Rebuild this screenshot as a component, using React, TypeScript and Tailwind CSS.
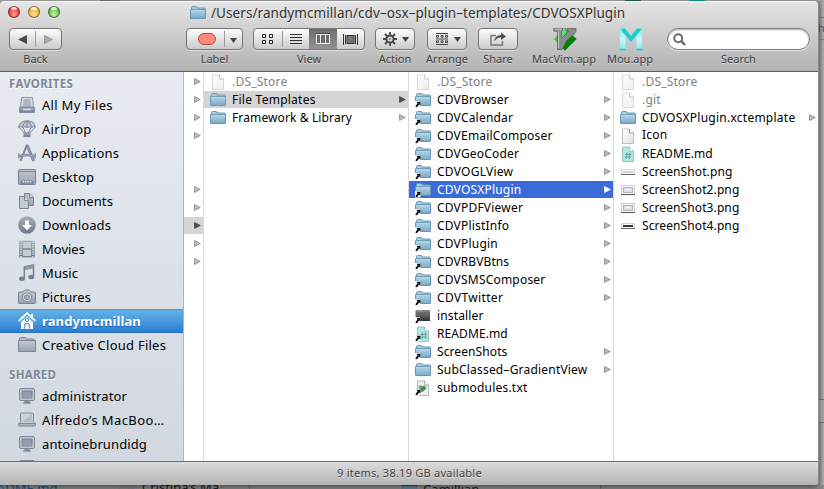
import type { ReactNode } from "react";

type Kind = "doc" | "folder" | "alias" | "terminal" | "readme" | "readmeAlias" | "vimAlias" | "shot" | "shot2" | "shot3" | "shot4";
type Entry = { name: string; kind: Kind; arrow?: boolean; dim?: boolean; selected?: "gray" | "blue"; track?: string; raised?: boolean };

function Defs() {
  return (
    <svg className="absolute size-0" aria-hidden="true">
      <defs>
        <linearGradient id="folder" x1="0" y1="0" x2="0" y2="1">
          <stop offset="0" stopColor="#b5d4e6" />
          <stop offset="1" stopColor="#78abca" />
        </linearGradient>
        <linearGradient id="side" x1="0" y1="0" x2="0" y2="1">
          <stop offset="0" stopColor="#a5adb9" />
          <stop offset="1" stopColor="#6f7b8c" />
        </linearGradient>
        <linearGradient id="pale" x1="0" y1="0" x2="0" y2="1">
          <stop offset="0" stopColor="#c3c9d2" />
          <stop offset="1" stopColor="#98a2b0" />
        </linearGradient>
        <linearGradient id="paper" x1="0" y1="0" x2="1" y2="1">
          <stop offset="0" stopColor="#ffffff" />
          <stop offset="1" stopColor="#e3e3e3" />
        </linearGradient>
        <linearGradient id="term" x1="0" y1="0" x2="0" y2="1">
          <stop offset="0" stopColor="#8a8a8a" />
          <stop offset="1" stopColor="#303030" />
        </linearGradient>
        <linearGradient id="mou" x1="0" y1="0" x2="0" y2="1">
          <stop offset="0" stopColor="#6ff0ea" />
          <stop offset="0.5" stopColor="#c9f9f6" />
          <stop offset="1" stopColor="#7af0ea" />
        </linearGradient>
        <linearGradient id="vim" x1="0" y1="0" x2="1" y2="1">
          <stop offset="0" stopColor="#5fdc7c" />
          <stop offset="1" stopColor="#006a00" />
        </linearGradient>
      </defs>
    </svg>
  );
}

function FolderShape() {
  return (
    <>
      <path d="M1.5 4V2.5Q1.5 1.5 2.5 1.5H6Q7 1.5 7 2.5V3H14.5Q15.5 3 15.5 4V5H1.5Z" fill="#a9cde1" stroke="#6b9ab5" />
      <path d="M0.5 4.5H15.5V13Q15.5 13.5 15 13.5H1Q0.5 13.5 0.5 13Z" fill="url(#folder)" stroke="#6596b3" />
      <path d="M1 5.3H15" stroke="#c4deed" strokeWidth="0.6" />
    </>
  );
}

function AliasArrow() {
  return (
    <>
      <path d="M0 9H5V10.5H5.5V15.5H0Z" fill="#fff" />
      <path d="M1.4 9.8H5.4V13.8L4.1 12.6L2 15.2L0.4 14.8L0.9 13.4L2.6 11.2Z" fill="#111" />
    </>
  );
}

function ShotIcon({ tall, dark }: { tall?: boolean; dark?: boolean }) {
  return tall ? (
    <>
      <rect x="1.5" y="3.5" width="13" height="9" fill="#fff" stroke="#cfcfcf" />
      <path d="M1 12.5H15" stroke="#555" />
      <rect x="3.5" y="5.5" width="9" height="5" fill="#dcdff0" stroke="#b0b0b0" />
      <path d="M6 7.5H10" stroke="#fff" />
    </>
  ) : (
    <>
      <rect x="1.5" y="5.5" width="13" height="5" fill="#fff" stroke="#d5d5d5" />
      <path d="M1 10.5H15" stroke="#666" />
      <rect x="3" y="7" width="10" height="2" fill={dark ? "#30353a" : "#cfcfcf"} />
    </>
  );
}

function FileIcon({ kind }: { kind: Kind }) {
  const body: Record<Kind, ReactNode> = {
    doc: (
      <>
        <path d="M2.5 1H9.5L13.5 5V15.5H2.5Z" fill="url(#paper)" stroke="#b0b0b0" strokeWidth="0.8" />
        <path d="M9.5 1V5H13.5" fill="#fff" stroke="#8c8c8c" strokeWidth="0.8" />
      </>
    ),
    folder: <FolderShape />,
    alias: (
      <>
        <FolderShape />
        <AliasArrow />
      </>
    ),
    terminal: (
      <>
        <rect x="0.5" y="2" width="14.5" height="11" rx="0.5" fill="url(#term)" />
        <path d="M1 5H15" stroke="#5d6a5d" />
        <path d="M3 3.5H7" stroke="#80a080" />
        <AliasArrow />
      </>
    ),
    readme: (
      <>
        <path d="M2.5 1H9.5L13.5 5V15.5H2.5Z" fill="#a5eee4" stroke="#8ab5b0" strokeWidth="0.8" />
        <path d="M9.5 1V5H13.5" fill="#fff" stroke="#9ab" strokeWidth="0.8" />
        <path d="M6.8 6.5L6.2 13M10 6.5L9.4 13M5 8.5H11.3M4.8 11H11" stroke="#6f8f96" strokeWidth="0.9" />
      </>
    ),
    readmeAlias: (
      <>
        <path d="M2.5 1H9.5L13.5 5V15.5H2.5Z" fill="#a5eee4" stroke="#8ab5b0" strokeWidth="0.8" />
        <path d="M9.5 1V5H13.5" fill="#fff" stroke="#9ab" strokeWidth="0.8" />
        <path d="M7.3 6V13M10.5 6V13M5.5 8.5H12M5.5 11H12" stroke="#6f8f96" strokeWidth="0.9" />
        <AliasArrow />
      </>
    ),
    vimAlias: (
      <>
        <path d="M2.5 1H9.5L13.5 5V15.5H2.5Z" fill="#f0f0f0" stroke="#a8a8a8" strokeWidth="0.8" />
        <path d="M9.5 1V5H13.5" fill="#fff" stroke="#999" strokeWidth="0.8" />
        <path d="M3.5 5.5H7V8L10 5.5H12L7 12H5Z" fill="#8d9a90" />
        <path d="M8 5.5L11.5 8.5L7.5 12L5.5 9Z" fill="#2f9b4d" />
        <AliasArrow />
      </>
    ),
    shot: <ShotIcon />,
    shot2: <ShotIcon tall />,
    shot3: <ShotIcon tall />,
    shot4: <ShotIcon dark />,
  };
  return (
    <svg className="size-4 shrink-0" viewBox="0 0 16 16">
      {body[kind]}
    </svg>
  );
}

function Arrow({ tone }: { tone?: "gray" | "blue" }) {
  const fill = tone === "blue" ? "#fff" : tone === "gray" ? "#4b4b4b" : "#bcbcbc";
  const stroke = tone ? fill : "#8a8a8a";
  return (
    <svg className="h-[7px] w-[7px] shrink-0" viewBox="0 0 7 7">
      <path d="M0.5 0.5L6.3 3.5L0.5 6.5Z" fill={fill} stroke={stroke} strokeWidth="0.8" />
    </svg>
  );
}

function Row({ e }: { e: Entry }) {
  const bg = e.selected === "blue" ? "bg-[#3b6bd8]" : e.selected === "gray" ? "bg-[#d5d5d5]" : "";
  const color = e.selected === "blue" ? "text-white" : e.dim ? "text-[#808080]" : "text-black";
  return (
    <div className={`mb-px flex h-[17px] items-center pr-[2px] pl-1.5 ${bg}`}>
      <span className={`flex ${e.dim ? "opacity-60" : ""}`}>
        <FileIcon kind={e.kind} />
      </span>
      <span className={`ml-1.5 flex-1 leading-[17px] whitespace-nowrap ${e.raised ? "-mt-[3px]" : ""} ${color} ${e.track ?? "tracking-[0.2px]"}`}>{e.name}</span>
      {e.arrow && <Arrow tone={e.selected} />}
    </div>
  );
}

function Column({ entries, last }: { entries: Entry[]; last?: boolean }) {
  return (
    <div className={`w-[205px] shrink-0 border-r pt-px text-xs ${last ? "border-transparent" : "border-[#d9d9d9]"}`}>
      {entries.map((e) => (
        <Row key={e.name} e={e} />
      ))}
    </div>
  );
}

const templates: Entry[] = [
  { name: ".DS_Store", kind: "doc", dim: true },
  { name: "File Templates", kind: "folder", arrow: true, selected: "gray", track: "tracking-[0.25px]" },
  { name: "Framework & Library", kind: "folder", arrow: true, track: "tracking-[0.12px]" },
];

const plugins: Entry[] = [
  { name: ".DS_Store", kind: "doc", dim: true },
  { name: "CDVBrowser", kind: "alias", arrow: true },
  { name: "CDVCalendar", kind: "alias", arrow: true },
  { name: "CDVEmailComposer", kind: "alias", arrow: true },
  { name: "CDVGeoCoder", kind: "alias", arrow: true },
  { name: "CDVOGLView", kind: "alias", arrow: true, track: "tracking-[0.25px]" },
  { name: "CDVOSXPlugin", kind: "alias", arrow: true, selected: "blue" },
  { name: "CDVPDFViewer", kind: "alias", arrow: true },
  { name: "CDVPlistInfo", kind: "alias", arrow: true },
  { name: "CDVPlugin", kind: "alias", arrow: true },
  { name: "CDVRBVBtns", kind: "alias", arrow: true, track: "tracking-[0.1px]" },
  { name: "CDVSMSComposer", kind: "alias", arrow: true },
  { name: "CDVTwitter", kind: "alias", arrow: true, track: "tracking-[0.35px]" },
  { name: "installer", kind: "terminal", track: "tracking-[0.15px]" },
  { name: "README.md", kind: "readmeAlias", track: "tracking-[0.1px]" },
  { name: "ScreenShots", kind: "alias", arrow: true, track: "tracking-[0.1px]" },
  { name: "SubClassed–GradientView", kind: "folder", arrow: true },
  { name: "submodules.txt", kind: "vimAlias" },
];

const contents: Entry[] = [
  { name: ".DS_Store", kind: "doc", dim: true },
  { name: ".git", kind: "doc", dim: true },
  { name: "CDVOSXPlugin.xctemplate", kind: "folder", arrow: true, track: "tracking-[0.25px]" },
  { name: "Icon", kind: "doc", raised: true },
  { name: "README.md", kind: "readme", track: "tracking-[0.1px]" },
  { name: "ScreenShot.png", kind: "shot", track: "tracking-[0.1px]" },
  { name: "ScreenShot2.png", kind: "shot2", track: "tracking-[0.1px]" },
  { name: "ScreenShot3.png", kind: "shot3", track: "tracking-[0.1px]" },
  { name: "ScreenShot4.png", kind: "shot4", track: "tracking-[0.1px]" },
];

const parentArrows = [true, true, true, true, false, false, true, true, true, true, true];

const computer = (
  <>
    <rect x="1.5" y="1.5" width="15" height="12" rx="1.5" fill="#c0c6cf" stroke="#7d8898" />
    <rect x="4" y="4" width="10" height="7" fill="#8c96a5" stroke="#727e8f" strokeWidth="0.8" />
    <path d="M4.5 6H13.5M4.5 8H13.5M4.5 10H13.5" stroke="#a7afbb" strokeWidth="0.7" />
    <path d="M6.5 14H11.5V15.5H13V16.8H5V15.5H6.5Z" fill="#7d8898" />
  </>
);

const sideIcons: Record<string, ReactNode> = {
  all: (
    <>
      <path d="M3.5 1.5H14.5L15.5 11H2.5Z" fill="#d8dde5" stroke="#8a94a3" />
      <path d="M5.5 4H12.5M5.3 6H12.7M5 8H13M4.8 10H13.2" stroke="#8a94a3" />
      <path d="M1.5 11.5H16.5V16.5H1.5Z" fill="url(#side)" stroke="#778394" strokeWidth="0.8" />
      <path d="M5 13.5H13" stroke="#d7dce4" strokeWidth="1.4" />
    </>
  ),
  airdrop: (
    <>
      <path d="M0.7 7.5Q1 1 9 0.8Q17 1 17.3 7.5Q15.5 6 13.5 7.5Q11.5 6 9 7.5Q6.5 6 4.5 7.5Q2.5 6 0.7 7.5Z" fill="#c0c7d0" stroke="#7b8797" />
      <path d="M4.5 7Q5 2.5 9 1Q13 2.5 13.5 7M9 1V7" stroke="#7b8797" fill="none" />
      <path d="M1.2 7.5L6.5 13M16.8 7.5L11.5 13M5 7.8L8 13M13 7.8L10 13" stroke="#7b8797" />
      <rect x="5.5" y="12.5" width="7" height="4.5" fill="#7b8797" />
      <path d="M6 14H12" stroke="#aab2bd" />
    </>
  ),
  apps: (
    <>
      <path d="M8.7 1.5L2.5 17" stroke="#758193" strokeWidth="2" />
      <path d="M9 1.5L15.8 17" stroke="#758193" strokeWidth="3" />
      <path d="M9.2 3L15.5 16.5" stroke="#b8c0cb" strokeWidth="0.7" />
      <path d="M1 12.3Q9 9.8 17 12.3" stroke="#758193" strokeWidth="2.6" fill="none" />
      <path d="M1.5 12Q9 9.8 16.5 12" stroke="#bac2cc" strokeWidth="0.7" fill="none" />
      <path d="M7.5 1.5L9 0L10.5 1.5" fill="#758193" />
      <path d="M0.8 9V14.5M17.2 9V14.5" stroke="#758193" strokeWidth="1" />
    </>
  ),
  desktop: (
    <>
      <rect x="0.5" y="1.5" width="17" height="15" rx="1" fill="url(#pale)" stroke="#778394" />
      <path d="M1 3.5H17" stroke="#778394" strokeWidth="1.2" />
      <path d="M4 12H14L16 15.5H2Z" fill="#717d8e" />
      <path d="M4.5 13.7H13.5" stroke="#dde2e9" strokeWidth="1.7" strokeDasharray="1.8 0.6" />
    </>
  ),
  docs: (
    <>
      <path d="M6.5 1.5H11.5L15.5 5V13.5H6.5Z" fill="url(#pale)" stroke="#778394" />
      <path d="M11.5 1.5V5.5H15.5" fill="#dce1e8" stroke="#778394" />
      <path d="M1.5 4.5H6.5L10.5 8.5V16.5H1.5Z" fill="#c2c9d2" stroke="#778394" />
      <path d="M6.5 4.5V8.5H10.5" fill="#e1e5eb" stroke="#778394" />
    </>
  ),
  downloads: (
    <>
      <circle cx="9" cy="9" r="8.8" fill="url(#side)" />
      <path d="M7 4.5H11V9H14L9 14.2L4 9H7Z" fill="#fff" />
    </>
  ),
  movies: (
    <>
      <rect x="1.2" y="0.7" width="15.6" height="16.6" fill="url(#side)" />
      <rect x="5" y="2" width="8" height="6" fill="#c6ccd5" />
      <rect x="5" y="10" width="8" height="6" fill="#c6ccd5" />
      <path d="M3 1.5V17M15 1.5V17" stroke="#e3e7ed" strokeWidth="1.5" strokeDasharray="1.3 1.1" />
    </>
  ),
  music: (
    <>
      <path d="M6 3L15.5 1V13" fill="none" stroke="#738092" strokeWidth="1.5" />
      <path d="M6.2 2.8L15.8 0.8V4.2L6.2 6.2Z" fill="#8e98a7" />
      <path d="M6.3 3V15" stroke="#738092" strokeWidth="1.5" />
      <ellipse cx="4" cy="14.8" rx="3" ry="2.2" fill="#738092" />
      <ellipse cx="13.2" cy="13" rx="3" ry="2.2" fill="#738092" />
    </>
  ),
  pictures: (
    <>
      <path d="M1.5 4H5L6.5 2H11.5L13 4H16.5Q17.5 4 17.5 5V14.5Q17.5 15.5 16.5 15.5H1.5Q0.5 15.5 0.5 14.5V5Q0.5 4 1.5 4Z" fill="url(#pale)" stroke="#778394" />
      <circle cx="9" cy="9.3" r="4.5" fill="#dbe0e6" stroke="#778394" />
      <circle cx="9" cy="9.3" r="2.5" fill="#a7b0bc" stroke="#778394" />
    </>
  ),
  home: (
    <>
      <path d="M0.7 9L9 1.2L17.3 9" fill="none" stroke="#fff" strokeWidth="1.9" />
      <path d="M13 2H15V6L13 4Z" fill="#fff" />
      <path d="M3 10L9 4.4L15 10V17H3Z" fill="#fff" />
      <path d="M3 8.8L9 3.2L15 8.8" fill="none" stroke="#5ea4de" strokeWidth="0.6" />
      <path d="M11.2 16.8V11.8H6.8V16.8" fill="none" stroke="#3f83c6" strokeWidth="1" />
      <circle cx="9" cy="8" r="1.6" fill="#fff" stroke="#3f83c6" strokeWidth="1" />
    </>
  ),
  folder: (
    <>
      <path d="M1.5 5V2.5Q1.5 1.5 2.5 1.5H7Q8 1.5 8 2.5V3H15.5Q16.5 3 16.5 4V5" fill="#b5bcc7" stroke="#7a8696" />
      <path d="M0.5 4.5H17.5V15.5H0.5Z" fill="url(#pale)" stroke="#7a8696" />
    </>
  ),
  computer,
  laptop: (
    <>
      <rect x="2.5" y="2" width="13" height="10.5" rx="1" fill="#cdd2d9" stroke="#7d8898" />
      <path d="M4 11L14 3.5V11Z" fill="#b4bcc7" />
      <path d="M0.5 12.5H17.5V14Q17.5 15 16.5 15H1.5Q0.5 15 0.5 14Z" fill="#aab2be" stroke="#7d8898" />
    </>
  ),
};

type SideItem = { label: string; icon: string; active?: boolean; track: string };

const favorites: SideItem[] = [
  { label: "All My Files", icon: "all", track: "tracking-[0.3px]" },
  { label: "AirDrop", icon: "airdrop", track: "tracking-[0.3px]" },
  { label: "Applications", icon: "apps", track: "tracking-[0.2px]" },
  { label: "Desktop", icon: "desktop", track: "tracking-[0.25px]" },
  { label: "Documents", icon: "docs", track: "tracking-[0.1px]" },
  { label: "Downloads", icon: "downloads", track: "tracking-[0.1px]" },
  { label: "Movies", icon: "movies", track: "tracking-normal" },
  { label: "Music", icon: "music", track: "tracking-[0.1px]" },
  { label: "Pictures", icon: "pictures", track: "tracking-normal" },
  { label: "randymcmillan", icon: "home", active: true, track: "tracking-[0.12px]" },
  { label: "Creative Cloud Files", icon: "folder", track: "tracking-[0.25px]" },
];

const shared: SideItem[] = [
  { label: "administrator", icon: "computer", track: "tracking-[0.12px]" },
  { label: "Alfredo’s MacBoo…", icon: "laptop", track: "tracking-[0.4px]" },
  { label: "antoinebrundidg", icon: "computer", track: "tracking-[0.1px]" },
  { label: "", icon: "computer", track: "" },
];

function SideRow({ item }: { item: SideItem }) {
  return (
    <div
      className={`flex h-6 shrink-0 items-center gap-1.5 pl-[18px] text-[13px] ${
        item.active
          ? "border-t border-b border-t-[#4796d6] border-b-[#2a70bd] bg-linear-to-b from-[#65b2e8] to-[#2b80d3] font-bold text-white text-shadow-[0_1px_1px_rgba(0,40,100,0.5)]"
          : "text-black"
      }`}
    >
      <svg className="size-[18px] shrink-0" viewBox="0 0 18 18">
        {sideIcons[item.icon]}
      </svg>
      <span className={`leading-5 whitespace-nowrap ${item.track}`}>{item.label}</span>
    </div>
  );
}

function Sidebar() {
  const heading = "shrink-0 pl-[9px] text-[11.5px] font-bold tracking-[0.3px] text-[#7c8797] text-shadow-[0_1px_0_#fff]";
  return (
    <aside className="flex w-[184px] shrink-0 flex-col overflow-hidden border-r border-[#b4b4b4] bg-linear-to-b from-[#e8ebf1] to-[#d2d8e0]">
      <h2 className={`h-[21px] leading-6 ${heading}`}>FAVORITES</h2>
      {favorites.map((f) => (
        <SideRow key={f.label} item={f} />
      ))}
      <h2 className={`h-[27px] leading-9 ${heading}`}>SHARED</h2>
      {shared.map((f) => (
        <SideRow key={f.label} item={f} />
      ))}
    </aside>
  );
}

const button = "flex h-[22px] items-center rounded-[4px] border border-[#767676] bg-linear-to-b from-[#fdfdfd] to-[#cbcbcb] shadow-[0_1px_0_rgba(255,255,255,0.5)]";

function Tool({ label, width, margin, children }: { label: string; width: string; margin: string; children: ReactNode }) {
  return (
    <div className={`flex shrink-0 flex-col items-center ${width} ${margin}`}>
      {children}
      <span className="mt-px text-[11px] leading-4 whitespace-nowrap text-[#3b3b3b] text-shadow-[0_1px_0_rgba(255,255,255,0.5)]">{label}</span>
    </div>
  );
}

function Down() {
  return (
    <svg className="h-[5px] w-[7px]" viewBox="0 0 7 5">
      <path d="M0 0H7L3.5 5Z" fill="#444" />
    </svg>
  );
}

function Light({ color }: { color: string }) {
  return (
    <span className={`flex size-3 flex-col items-center rounded-full border border-black/45 ${color} shadow-[0_1px_0_rgba(255,255,255,0.6)]`}>
      <span className="h-[3px] w-[6px] rounded-full bg-white/70" />
    </span>
  );
}

function Toolbar() {
  return (
    <header className="flex h-[71px] shrink-0 flex-col rounded-t-[4px] border-t border-b border-t-[#f6f6f6] border-b-[#5e5e5e] bg-linear-to-b from-[#e5e5e5] to-[#b2b2b2]">
      <div className="flex h-[26px] shrink-0 items-start">
        <div className="flex gap-2 pt-1 pl-2">
          <Light color="bg-radial-[at_50%_75%] from-[#ff9c94] to-[#d91f28]" />
          <Light color="bg-radial-[at_50%_75%] from-[#ffe48c] to-[#e99a20]" />
          <Light color="bg-radial-[at_50%_75%] from-[#c5f5a0] to-[#45a934]" />
        </div>
        <svg className="mt-[3px] ml-[130px] size-4" viewBox="0 0 16 16">
          <FolderShape />
        </svg>
        <h1 className="ml-[5px] text-[13.5px] leading-[22px] tracking-[0.07px] whitespace-nowrap text-[#303030] text-shadow-[0_1px_0_rgba(255,255,255,0.6)]">
          /Users/randymcmillan/cdv–osx–plugin–templates/CDVOSXPlugin
        </h1>
      </div>
      <div className="flex items-start">
        <Tool label="Back" width="w-[53px]" margin="ml-[9px]">
          <div className={`${button} w-full`}>
            <span className="flex flex-1 justify-center">
              <svg className="h-[9px] w-[9px]" viewBox="0 0 9 9">
                <path d="M9 0V9L0 4.5Z" fill="#4a4a4a" />
              </svg>
            </span>
            <span className="h-4 w-px bg-[#9a9a9a]" />
            <span className="flex flex-1 justify-center">
              <svg className="h-[9px] w-[9px]" viewBox="0 0 9 9">
                <path d="M0.4 0.4V8.6L8.5 4.5Z" fill="#aaa" stroke="#888" strokeWidth="0.7" />
              </svg>
            </span>
          </div>
        </Tool>
        <Tool label="Label" width="w-[57px]" margin="ml-[124px]">
          <div className={`${button} w-full`}>
            <span className="ml-[11px] h-3 w-[18px] rounded-full border border-[#a55147] bg-[#ff8a7c]" />
            <span className="ml-2 h-4 w-px bg-[#9a9a9a]" />
            <span className="flex flex-1 justify-center pt-0.5">
              <Down />
            </span>
          </div>
        </Tool>
        <Tool label="View" width="w-[112px]" margin="ml-[10px]">
          <div className={`${button} w-full`}>
            <span className="flex w-7 justify-center">
              <svg className="h-[11px] w-3" viewBox="0 0 12 11">
                <path d="M0.5 0.5H3.5V3.5H0.5ZM7.5 0.5H10.5V3.5H7.5ZM0.5 6.5H3.5V9.5H0.5ZM7.5 6.5H10.5V9.5H7.5Z" fill="#fff" stroke="#222" />
              </svg>
            </span>
            <span className="h-4 w-px bg-[#9a9a9a]" />
            <span className="flex w-[26px] justify-center">
              <svg className="h-[11px] w-3" viewBox="0 0 12 11">
                <path d="M0 0.5H12M0 3.5H12M0 6.5H12M0 9.5H12" stroke="#2d2d2d" />
              </svg>
            </span>
            <span className="flex h-full w-7 items-center justify-center bg-linear-to-b from-[#6d6d6d] to-[#929292]">
              <svg className="h-3 w-[14px]" viewBox="0 0 14 12">
                <path d="M0.5 1.5V10.5H13.5V1.5Z" fill="#6a6a6a" stroke="#f5f5f5" />
                <path d="M4.5 1V11M9.5 1V11" stroke="#f5f5f5" />
                <path d="M0 0.5H14" stroke="#444" />
              </svg>
            </span>
            <span className="flex flex-1 justify-center">
              <svg className="h-[11px] w-[15px]" viewBox="0 0 15 11">
                <path d="M0.5 0V11M2.5 1V10M12.5 1V10M14.5 0V11" stroke="#333" />
                <rect x="4" y="1.5" width="7" height="8" fill="#777" stroke="#333" />
              </svg>
            </span>
          </div>
        </Tool>
        <Tool label="Action" width="w-[40px]" margin="ml-[10px]">
          <div className={`${button} w-full justify-between pr-[5px] pl-[7px]`}>
            <svg className="size-[14px]" viewBox="0 0 14 14">
              <path d="M7 0V14M0 7H14M2 2L12 12M12 2L2 12" stroke="#484848" strokeWidth="1.8" />
              <circle cx="7" cy="7" r="3.6" fill="#ddd" stroke="#484848" strokeWidth="2" />
              <circle cx="7" cy="7" r="0.9" fill="#666" />
            </svg>
            <Down />
          </div>
        </Tool>
        <Tool label="Arrange" width="w-[40px]" margin="ml-[12px]">
          <div className={`${button} w-full justify-between pr-[5px] pl-2`}>
            <svg className="h-[12px] w-3" viewBox="0 0 12 12">
              <path d="M0 0.5H12M0 6H12M0 11.5H12" stroke="#444" />
              <path d="M0.5 2.5H2.5V4.2H0.5ZM5 2.5H7V4.2H5ZM9.5 2.5H11.5V4.2H9.5ZM0.5 7.8H2.5V9.5H0.5ZM5 7.8H7V9.5H5ZM9.5 7.8H11.5V9.5H9.5Z" fill="none" stroke="#333" strokeWidth="0.9" />
            </svg>
            <Down />
          </div>
        </Tool>
        <Tool label="Share" width="w-[40px]" margin="ml-[11px]">
          <div className={`${button} w-full justify-center`}>
            <svg className="h-[14px] w-4" viewBox="0 0 16 14">
              <path d="M6 3.5H1V13H12.5V9" fill="none" stroke="#777" strokeWidth="1.5" />
              <path d="M4.5 9.5Q4.5 3 11 3V0.5L16 4.5L11 8V5.5Q7 5.2 4.5 9.5Z" fill="#505050" />
            </svg>
          </div>
        </Tool>
        <Tool label="MacVim.app" width="w-[66px]" margin="ml-[13px]">
          <svg className="-mt-px mb-[-1px] ml-0.5 h-6 w-6" viewBox="0 0 24 24">
            <path d="M12 0.5L23.5 12L12 23.5L1 12Z" fill="url(#vim)" />
            <path d="M0.8 1.5H10V4.2H9V11L15.5 4.2H14V1.5H23V4.5L9 22.5H4.5V4.2H0.8Z" fill="#8b8f8b" stroke="#555" strokeWidth="0.7" />
            <path d="M5.5 4V21M1.5 2.2H9" stroke="#c7cac7" />
            <path d="M10 0.8L14 5L9 10.5V4H10Z" fill="#62d97e" />
            <path d="M13 14L19 8.5L23.5 12L12 23.5L9.5 21.5Z" fill="#087d08" />
          </svg>
        </Tool>
        <Tool label="Mou.app" width="w-[48px]" margin="ml-[9px]">
          <svg className="-mt-px mb-[-1px] ml-px h-6 w-6" viewBox="0 0 24 24">
            <path d="M1.2 1.5H5.5L6.5 3V22.5H0.8ZM22.8 1.5H18.5L17.5 3V22.5H23.2Z" fill="url(#mou)" />
            <path d="M2.5 1.5H6L12 9L18 1.5H21.5V3.5L12 15L2.5 3.5Z" fill="#17cfcc" />
            <path d="M0.8 22.5H6.5M17.5 22.5H23.2" stroke="#14c9cd" strokeWidth="1.4" />
          </svg>
        </Tool>
        <Tool label="Search" width="w-[143px]" margin="ml-[13px]">
          <div className="flex h-[22px] w-full items-center rounded-full border border-[#7f7f7f] bg-white pl-[5px] shadow-[inset_0_1px_2px_rgba(0,0,0,0.35),0_1px_0_rgba(255,255,255,0.5)]">
            <svg className="size-[13px]" viewBox="0 0 13 13">
              <circle cx="5.2" cy="5.2" r="4" fill="none" stroke="#6a6a6a" strokeWidth="2" />
              <path d="M8.2 8.2L12 12" stroke="#6a6a6a" strokeWidth="2.4" />
            </svg>
          </div>
        </Tool>
      </div>
    </header>
  );
}

function Backdrop() {
  return (
    <div className="absolute inset-0 flex flex-col justify-between overflow-hidden bg-[#a5a5a5] text-[13px]">
      <div className="flex h-px">
        <span className="w-[100px] bg-[#aaa]" />
        <span className="w-5 bg-[#777]" />
        <span className="ml-[505px] w-4 bg-[#26634a]" />
        <span className="ml-[48px] w-4 bg-[#169a9a]" />
      </div>
      <div className="flex h-[484px] justify-end">
        <div className="flex w-[6px] flex-col bg-linear-to-r from-[#8d8d8d] to-[#b3b3b3]">
          <div className="mt-4 h-[23px] overflow-hidden border-t border-b border-[#858585] text-[11px] leading-5 text-[#555]">h</div>
          <div className="mt-[359px] h-[24px] border-t border-b border-[#7b7b7b] bg-[#aaa]" />
        </div>
      </div>
      <div className="flex h-1 items-start overflow-hidden bg-[#8b8b8b] leading-none text-[#1d1d1d]">
        <span className="w-[60px] -translate-x-[3px] -translate-y-[3px] text-[#245382]">ADME.md</span>
        <span className="ml-[59px] h-1 w-4 bg-[#858585]" />
        <span className="ml-[7px] w-[100px] -translate-y-1 whitespace-nowrap">Cristina’s Ma…</span>
        <span className="ml-[7px] h-1 w-px bg-[#707070]" />
        <span className="ml-[151px] h-1 w-4 border-t border-[#335a70] bg-[#648498]" />
        <span className="ml-1.5 w-[177px] -translate-y-0.5">Camillian</span>
        <span className="h-1 w-px bg-[#707070]" />
      </div>
    </div>
  );
}

export default function App() {
  return (
    <div className="relative h-[489px] w-[824px] overflow-hidden font-['Noto_Sans',sans-serif]">
      <Defs />
      <Backdrop />
      <div className="relative pt-px">
        <main className="flex h-[484px] w-[819px] flex-col overflow-hidden rounded-t-[4px] rounded-br-[4px] border-r border-[#8b8b8b] shadow-[0_2px_6px_rgba(0,0,0,0.5)]">
          <Toolbar />
          <div className="flex h-[389px] shrink-0 bg-white">
            <Sidebar />
            <div className="w-5 shrink-0 border-r border-[#d9d9d9] pt-px">
              {parentArrows.map((show, i) => (
                <div key={i} className={`mb-px flex h-[17px] items-center justify-end pr-[2px] ${i === 8 ? "bg-[#d5d5d5]" : ""}`}>
                  {show && <Arrow tone={i === 8 ? "gray" : undefined} />}
                </div>
              ))}
            </div>
            <Column entries={templates} />
            <Column entries={plugins} />
            <Column entries={contents} last />
          </div>
          <footer className="flex h-6 shrink-0 items-center justify-center border-t border-[#6f6f6f] bg-linear-to-b from-[#dcdcdc] to-[#b4b4b4] pl-px text-[11px] tracking-[0.25px] text-[#404040] text-shadow-[0_1px_0_rgba(255,255,255,0.5)]">
            9 items, 38.19 GB available
          </footer>
        </main>
      </div>
    </div>
  );
}
